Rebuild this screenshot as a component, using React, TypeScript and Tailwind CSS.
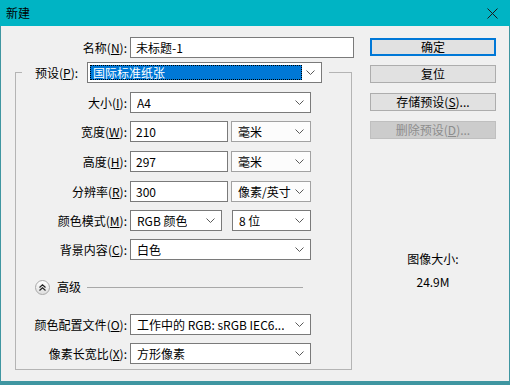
import React from "react";

const Chevron: React.FC = () => (
  <svg width="9" height="5" viewBox="0 0 9 5" className="shrink-0">
    <polyline points="0.5,0.5 4.5,4.5 8.5,0.5" fill="none" stroke="#5a5a5a" strokeWidth="1" />
  </svg>
);

const Label: React.FC<{ text: string; keyChar: string; w: string }> = ({ text, keyChar, w }) => (
  <div className={`${w} shrink-0 text-right whitespace-nowrap`}>
    {text}(<span className="underline">{keyChar}</span>):
  </div>
);

const Select: React.FC<{ value: string; className: string; light?: boolean }> = ({ value, className, light }) => (
  <div
    className={`${className} h-[21px] flex items-center justify-between pl-[6px] pr-[6px] border ${
      light ? "border-[#a2a2a2] bg-[#fcfcfc]" : "border-[#7a7a7a] bg-white"
    }`}
  >
    <span className="whitespace-nowrap overflow-hidden">{value}</span>
    <Chevron />
  </div>
);

const Input: React.FC<{ value: string; className: string }> = ({ value, className }) => (
  <div className={`${className} h-[21px] flex items-center pl-[5px] border border-[#7a7a7a] bg-white`}>
    {value}
  </div>
);

const Button: React.FC<{ children: React.ReactNode; primary?: boolean; disabled?: boolean; className?: string }> = ({
  children,
  primary,
  disabled,
  className = "",
}) => (
  <div
    className={`${className} h-[18px] w-[126px] flex items-center justify-center ${
      primary
        ? "border-2 border-[#0078d7] bg-[#e1e1e1] text-black"
        : disabled
        ? "border border-[#bfbfbf] bg-[#cccccc] text-[#8d8d8d]"
        : "border border-[#adadad] bg-[#e1e1e1] text-black"
    }`}
  >
    {children}
  </div>
);

export default function App() {
  return (
    <div className="w-[510px] h-[385px] flex flex-col bg-[#3f96a1] text-[12px] leading-[16px] text-black font-['Noto_Sans_CJK_SC','Microsoft_YaHei',sans-serif]">
      {/* Title bar */}
      <div className="h-[26px] shrink-0 bg-[#00b4c4] flex items-center justify-between pl-[6px] pr-[12px]">
        <span>新建</span>
        <svg width="11" height="11" viewBox="0 0 11 11">
          <line x1="0.5" y1="0.5" x2="10.5" y2="10.5" stroke="#1b1b1b" strokeWidth="1" />
          <line x1="10.5" y1="0.5" x2="0.5" y2="10.5" stroke="#1b1b1b" strokeWidth="1" />
        </svg>
      </div>

      {/* Body */}
      <div className="flex-1 mx-[1px] mb-[4px] bg-[#f0f0f0] flex">
        {/* Left column */}
        <div className="w-[355px] shrink-0 pl-[14px] pt-[11px] flex flex-col">
          <div className="flex items-center h-[21px]">
            <Label text="名称" keyChar="N" w="w-[112px]" />
            <Input value="未标题-1" className="ml-[3px] w-[224px]" />
          </div>

          <fieldset className="mt-[4px] w-[337px] border border-[#b4b4b4] pb-[5px] flex flex-col">
            <legend className="ml-[6px] pl-[13px] pr-[7px]">
              <div className="flex items-center h-[21px]">
                <span className="w-[52px] shrink-0 whitespace-nowrap">
                  预设(<span className="underline">P</span>):
                </span>
                <div className="w-[235px] shrink-0 h-[21px] border border-[#7a7a7a] bg-white flex items-center p-[2px]">
                  <div className="w-[212px] shrink-0 h-[15px] bg-[#0078d7] border border-dotted border-black text-white flex items-center pl-[2px]">
                    国际标准纸张
                  </div>
                  <div className="flex-1 flex justify-center">
                    <Chevron />
                  </div>
                </div>
              </div>
            </legend>

            <div className="flex items-center mt-[9px]">
              <Label text="大小" keyChar="I" w="w-[111px]" />
              <Select value="A4" className="ml-[3px] w-[181px]" />
            </div>
            <div className="flex items-center mt-[8px]">
              <Label text="宽度" keyChar="W" w="w-[111px]" />
              <Input value="210" className="ml-[3px] w-[98px]" />
              <Select value="毫米" className="ml-[3px] w-[80px]" light />
            </div>
            <div className="flex items-center mt-[9px]">
              <Label text="高度" keyChar="H" w="w-[111px]" />
              <Input value="297" className="ml-[3px] w-[98px]" />
              <Select value="毫米" className="ml-[3px] w-[80px]" light />
            </div>
            <div className="flex items-center mt-[9px]">
              <Label text="分辨率" keyChar="R" w="w-[111px]" />
              <Input value="300" className="ml-[3px] w-[98px]" />
              <Select value="像素/英寸" className="ml-[3px] w-[80px]" light />
            </div>
            <div className="flex items-center mt-[8px]">
              <Label text="颜色模式" keyChar="M" w="w-[111px]" />
              <Select value="RGB 颜色" className="ml-[3px] w-[92px]" />
              <Select value="8 位" className="ml-[10px] w-[79px]" />
            </div>
            <div className="flex items-center mt-[8px]">
              <Label text="背景内容" keyChar="C" w="w-[111px]" />
              <Select value="白色" className="ml-[3px] w-[181px]" />
            </div>

            {/* Advanced */}
            <div className="flex items-center h-[16px] mt-[19px] pl-[19px]">
              <div className="w-[15px] h-[15px] rounded-full border border-[#a9a9a9] bg-gradient-to-b from-white to-[#dedede] flex items-center justify-center">
                <svg width="7" height="7" viewBox="0 0 7 7">
                  <polyline points="0.5,3.5 3.5,0.8 6.5,3.5" fill="none" stroke="#222" strokeWidth="1.2" />
                  <polyline points="0.5,6.5 3.5,3.8 6.5,6.5" fill="none" stroke="#222" strokeWidth="1.2" />
                </svg>
              </div>
              <span className="ml-[7px]">高级</span>
              <div className="ml-[6px] w-[216px] h-px bg-[#a8a8a8]" />
            </div>

            <div className="flex items-center mt-[19px]">
              <Label text="颜色配置文件" keyChar="O" w="w-[111px]" />
              <Select value="工作中的 RGB: sRGB IEC6..." className="ml-[3px] w-[181px]" />
            </div>
            <div className="flex items-center mt-[8px]">
              <Label text="像素长宽比" keyChar="X" w="w-[111px]" />
              <Select value="方形像素" className="ml-[3px] w-[181px]" />
            </div>
          </fieldset>
        </div>

        {/* Right column */}
        <div className="ml-[14px] w-[126px] pt-[12px] flex flex-col">
          <Button primary>确定</Button>
          <Button className="mt-[9px]">复位</Button>
          <Button className="mt-[10px]">
            存储预设(<span className="underline">S</span>)...
          </Button>
          <Button className="mt-[10px]" disabled>
            删除预设(<span className="underline">D</span>)...
          </Button>
          <div className="mt-[112px] text-center">图像大小:</div>
          <div className="mt-[7px] text-center">24.9M</div>
        </div>
      </div>
    </div>
  );
}
